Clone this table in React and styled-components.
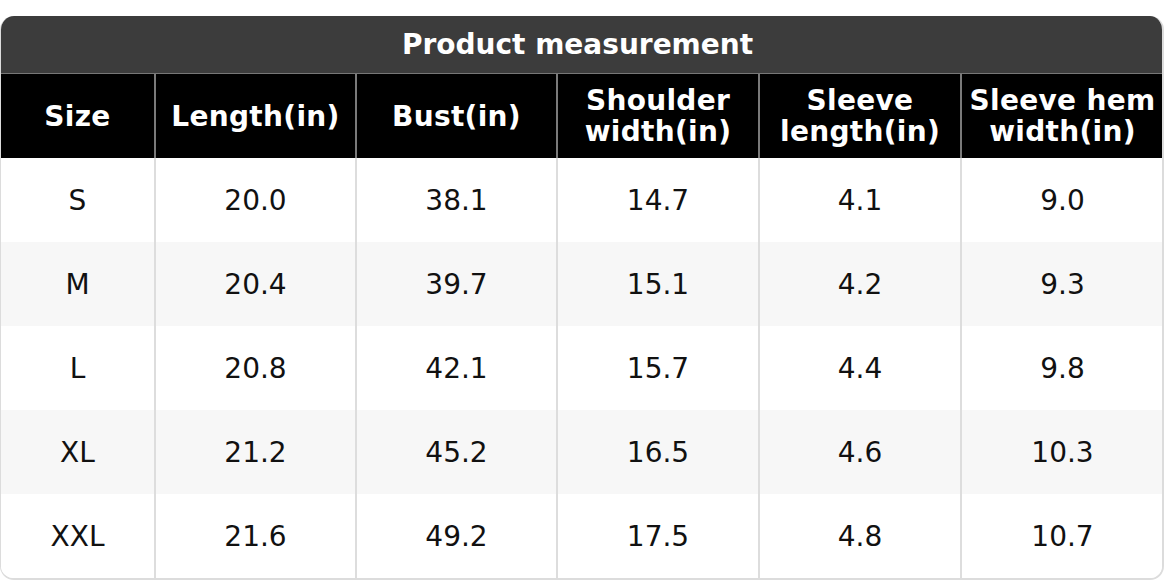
import React from "react";
import styled, { createGlobalStyle } from "styled-components";

const GlobalStyle = createGlobalStyle`
  html, body {
    margin: 0;
    padding: 0;
    background: #ffffff;
  }
  body {
    font-family: "DejaVu Sans", "Liberation Sans", sans-serif;
  }
`;

const columns = [
  { label: "Size", width: 154 },
  { label: "Length(in)", width: 201 },
  { label: "Bust(in)", width: 201 },
  { label: ["Shoulder", "width(in)"], width: 202 },
  { label: ["Sleeve", "length(in)"], width: 202 },
  { label: ["Sleeve hem", "width(in)"], width: 202 },
];

const rows = [
  ["S", "20.0", "38.1", "14.7", "4.1", "9.0"],
  ["M", "20.4", "39.7", "15.1", "4.2", "9.3"],
  ["L", "20.8", "42.1", "15.7", "4.4", "9.8"],
  ["XL", "21.2", "45.2", "16.5", "4.6", "10.3"],
  ["XXL", "21.6", "49.2", "17.5", "4.8", "10.7"],
];

const App = () => {
  return (
    <>
      <GlobalStyle />
      <Page>
        <TableCard>
          <Title>Product measurement</Title>
          <Table>
            <colgroup>
              {columns.map((col, i) => (
                <col key={i} style={{ width: col.width }} />
              ))}
            </colgroup>
            <thead>
              <tr>
                {columns.map((col, i) => (
                  <HeadCell key={i}>
                    {Array.isArray(col.label)
                      ? col.label.map((line) => <div key={line}>{line}</div>)
                      : col.label}
                  </HeadCell>
                ))}
              </tr>
            </thead>
            <tbody>
              {rows.map((row, r) => (
                <Row key={row[0]} $striped={r % 2 === 1}>
                  {row.map((value, c) => (
                    <Cell key={c}>{value}</Cell>
                  ))}
                </Row>
              ))}
            </tbody>
          </Table>
        </TableCard>
      </Page>
    </>
  );
};

export default App;

const Page = styled.div`
  padding-top: 16px;
  width: 1164px;
`;

const TableCard = styled.div`
  border-radius: 14px;
  overflow: hidden;
  border: 1px solid #dcdcdc;
  border-top: none;
  border-right-width: 2px;
  border-bottom-width: 2px;
  background: #ffffff;
`;

const Title = styled.div`
  height: 57px;
  padding-right: 8px;
  background: #3c3c3c;
  color: #ffffff;
  font-weight: 700;
  font-size: 28px;
  display: flex;
  align-items: center;
  justify-content: center;
  border-bottom: 1px solid #777777;
`;

const Table = styled.table`
  width: 100%;
  table-layout: fixed;
  border-collapse: collapse;
`;

const HeadCell = styled.th`
  height: 84px;
  padding: 0 4px;
  background: #000000;
  color: #ffffff;
  font-weight: 700;
  font-size: 28px;
  line-height: 31px;
  letter-spacing: 0.3px;
  text-align: center;
  border-left: 2px solid #7a7a7a;
  &:first-child {
    border-left: none;
  }
`;

const Row = styled.tr`
  background: ${(p) => (p.$striped ? "#f7f7f7" : "#ffffff")};
`;

const Cell = styled.td`
  height: 84px;
  padding: 0;
  text-align: center;
  font-size: 28px;
  color: #111111;
  border-left: 2px solid #dddddd;
  &:first-child {
    border-left: none;
  }
`;
